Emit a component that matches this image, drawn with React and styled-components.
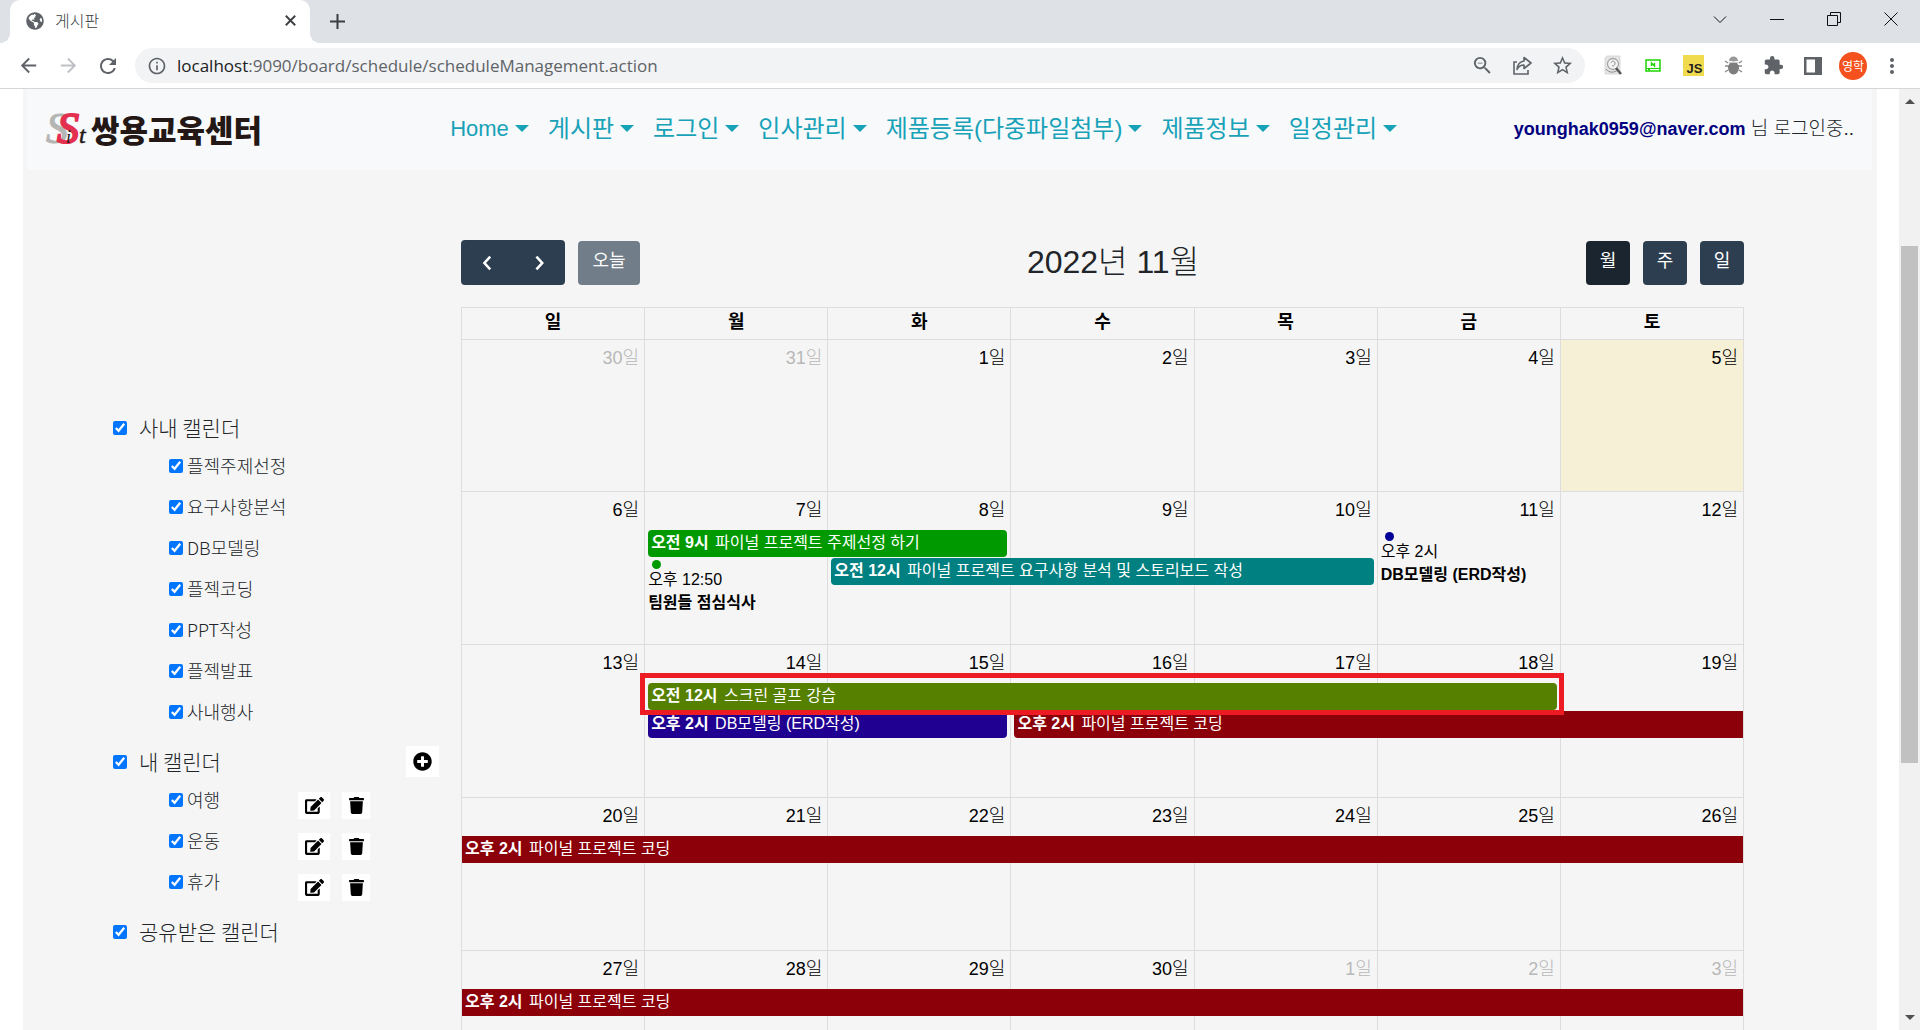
import React from "react";
import styled, { createGlobalStyle, css } from "styled-components";
import {
  MdArrowBack,
  MdArrowForward,
  MdRefresh,
  MdInfoOutline,
  MdZoomOut,
  MdStarBorder,
  MdExtension,
  MdMoreVert,
} from "react-icons/md";
import { FaEdit, FaTrash, FaPlusCircle, FaGlobeAmericas } from "react-icons/fa";

const korean = `"Noto Sans CJK KR", "Noto Sans CJK JP", sans-serif`;
const mixed = `"Liberation Sans", ${korean}`;

const GlobalStyle = createGlobalStyle`
  *, *::before, *::after { box-sizing: border-box; }
  body { margin: 0; overflow: hidden; background: #fff; color: #212529; font-family: ${mixed}; font-size: 18px; font-weight: 300; }
  button, input { font: inherit; color: inherit; }
  button { padding: 0; border: 0; background: none; display: inline-flex; align-items: center; justify-content: center; }
  h1, ul { margin: 0; padding: 0; font-weight: inherit; }
  b, th { font-weight: 700; }
  ul { list-style: none; }
`;

/* ---------- Browser frame ---------- */

const Window = styled.div`
  height: 100vh;
  display: flex;
  flex-direction: column;
`;

const TabStrip = styled.div`
  flex: none;
  height: 43px;
  padding-left: 10px;
  display: flex;
  align-items: flex-start;
  background: #dee1e6;
`;

const Tab = styled.div`
  position: relative;
  width: 300px;
  height: 43px;
  padding: 0 12px 2px 16px;
  display: flex;
  align-items: center;
  gap: 11px;
  border-radius: 10px 10px 0 0;
  background: #fff;
  color: #3c4043;
  font-family: ${korean};
  font-size: 16px;
  line-height: 22px;

  &::before,
  &::after {
    content: "";
    position: absolute;
    bottom: 0;
    width: 10px;
    height: 10px;
  }
  &::before {
    left: -10px;
    background: radial-gradient(circle at 0 0, transparent 10px, #fff 10px);
  }
  &::after {
    right: -10px;
    background: radial-gradient(circle at 100% 0, transparent 10px, #fff 10px);
  }
`;

const TabTitle = styled.span`
  flex: 1;
  padding-bottom: 2px;
`;

const IconButton = styled.button`
  flex: none;
  width: ${(p) => p.$w || 40}px;
  height: ${(p) => p.$h || 40}px;
  color: ${(p) => p.$color || "#5f6368"};
`;

const WindowControls = styled.div`
  margin-left: auto;
  display: flex;
`;

const Toolbar = styled.div`
  flex: none;
  height: 46px;
  padding: 0 9px 0 8px;
  display: flex;
  align-items: center;
  border-bottom: 1px solid #d5d6d8;
  background: #fff;
`;

const AddressBar = styled.label`
  flex: 1;
  height: 35px;
  margin: 0 8px 0 7px;
  padding: 0 3px 0 12px;
  display: flex;
  align-items: center;
  border-radius: 18px;
  background: #f1f3f4;
  color: #202124;
  font-family: "Open Sans", "Noto Sans", sans-serif;
  font-size: 17px;
  font-weight: 400;

  & > svg {
    margin-right: 10px;
    color: #5f6368;
  }
`;

const PathInput = styled.input`
  flex: 1;
  min-width: 0;
  padding: 0;
  border: 0;
  outline: 0;
  background: transparent;
  color: #5f6368;
`;

const Avatar = styled.span`
  width: 28px;
  height: 28px;
  border-radius: 50%;
  background: #f4511e;
  color: #fff;
  font-family: ${korean};
  font-size: 12px;
  font-weight: 400;
  line-height: 27px;
  text-align: center;
`;

const Viewport = styled.div`
  flex: 1;
  min-height: 0;
  display: flex;
  overflow: hidden;
`;

const Scrollbar = styled.div`
  flex: none;
  width: 21px;
  display: flex;
  flex-direction: column;
  align-items: center;
  background: #f1f1f1;
`;

const Thumb = styled.div`
  width: 17px;
  height: 55%;
  margin-bottom: auto;
  background: #c1c1c1;
`;

const ThumbSpace = styled.div`
  height: 14%;
`;

const Arrow = styled.span`
  flex: none;
  margin: 10px 0;
  border: 5px solid transparent;
  ${(p) =>
    p.$down
      ? css`
          border-top-color: #505050;
          border-bottom: 0;
        `
      : css`
          border-bottom-color: #505050;
          border-top: 0;
        `}
`;

/* ---------- Page ---------- */

const Page = styled.div`
  flex: 1;
  min-width: 0;
  margin: 0 22px 0 23px;
  background: #f5f5f5;
`;

const SiteHeader = styled.header`
  height: 81px;
  margin: 0 5px 0 4px;
  padding: 0 18px 2px;
  display: flex;
  align-items: center;
  background: #f8f9fb;
`;

const Logo = styled.a`
  margin-right: 188px;
  display: flex;
  align-items: center;
  gap: 2px;
  color: #231815;
  font-family: ${korean};
  font-size: 31px;
  font-weight: 900;
  line-height: 36px;
  text-decoration: none;
`;

const Nav = styled.nav`
  display: flex;
  gap: 19px;
`;

const NavLink = styled.a`
  display: flex;
  align-items: center;
  gap: 6px;
  color: #17a2b8;
  font-size: ${(p) => (p.$latin ? 22 : 24)}px;
  font-weight: 400;
  line-height: 36px;
  text-decoration: none;
  white-space: nowrap;

  &::after {
    content: "";
    border: 7px solid transparent;
    border-top-color: currentColor;
    border-bottom: 0;
  }
`;

const Account = styled.div`
  margin-left: auto;
  font-size: 19px;
  line-height: 26px;
  white-space: nowrap;

  b {
    color: #000080;
    font-size: 18px;
  }
`;

const Main = styled.main`
  padding: 70px 133px 0 90px;
  display: grid;
  grid-template-columns: 326px minmax(0, 1fr);
  gap: 22px;
`;

/* ---------- Calendar list ---------- */

const Sidebar = styled.aside`
  padding-top: 170px;
  display: flex;
  flex-direction: column;
  gap: 13px;
  font-family: ${korean};
`;

const GroupHead = styled.div`
  height: 34px;
  display: flex;
  align-items: center;
  justify-content: space-between;
`;

const CheckLabel = styled.label`
  display: flex;
  align-items: center;
  gap: ${(p) => (p.$group ? 12 : 4)}px;
  font-size: ${(p) => (p.$group ? 21 : 18)}px;
  line-height: 28px;
  white-space: nowrap;
`;

const Checkbox = styled.input`
  width: 14px;
  height: 14px;
  margin: 2px 0 0;
  accent-color: #0075ff;
`;

const ItemRow = styled.li`
  height: 41px;
  padding-left: 56px;
  display: grid;
  grid-template-columns: 129px auto;
  justify-content: start;
  align-items: center;
`;

const ActionButton = styled.button`
  width: ${(p) => p.$w}px;
  height: ${(p) => p.$h}px;
  background: #fff;
  color: #000;
`;

const RowActions = styled.div`
  align-self: end;
  display: flex;
  gap: 12px;
`;

/* ---------- Calendar ---------- */

const CalToolbar = styled.div`
  height: 45px;
  margin-bottom: 22px;
  display: flex;
  justify-content: space-between;
  align-items: center;
`;

const ButtonRow = styled.div`
  display: flex;
  align-items: flex-end;
  gap: 13px;
`;

const NavGroup = styled.div`
  display: flex;
  border-radius: 4px;
  background: #2c3e50;

  button {
    width: 52px;
    height: 45px;
    color: #fff;
  }
`;

const CalButton = styled.button`
  width: ${(p) => p.$w || 44}px;
  height: 44px;
  padding-bottom: 4px;
  border-radius: 4px;
  background: ${(p) => (p.$active ? "#1a252f" : "#2c3e50")};
  color: #fff;
  font-weight: 400;
  line-height: 26px;

  &:disabled {
    opacity: 0.65;
  }
`;

const CalTitle = styled.h1`
  padding-bottom: 2px;
  font-size: 32px;
  line-height: 40px;
`;

const Table = styled.table`
  width: 100%;
  table-layout: fixed;
  border-collapse: collapse;
  color: #000;

  th,
  td {
    padding: 0;
    border: 1px solid #ddd;
  }
  th {
    height: 32px;
    padding-bottom: 4px;
    line-height: 26px;
  }
  td {
    height: 153px;
    vertical-align: top;
  }
  tbody tr:first-child td {
    height: 152px;
  }
`;

const Day = styled.td`
  background: ${(p) => (p.$today ? "#f6f0d7" : "transparent")};
`;

const DayNumber = styled.div`
  height: 38px;
  padding: 5px 5px 0 0;
  line-height: 26px;
  text-align: right;
  color: ${(p) => (p.$other ? "#b8b8b8" : "#000")};
`;

const Lane = styled.div`
  height: 28px;
`;

const EventBar = styled.a`
  position: relative;
  z-index: ${(p) => (p.$marked ? 2 : 1)};
  display: block;
  width: calc(${(p) => p.$span * 100}% + ${(p) => p.$span - 1 - (p.$from ? 0 : 3) - (p.$open ? 0 : 3)}px);
  height: 27px;
  margin: 0 0 1px ${(p) => (p.$from ? 0 : 3)}px;
  padding-left: 3px;
  border-radius: ${(p) => (p.$from ? 0 : 4)}px ${(p) => (p.$open ? "0 0" : "4px 4px")} ${(p) => (p.$from ? 0 : 4)}px;
  background: ${(p) => p.$color};
  color: #fff;
  font-size: 16px;
  font-weight: 400;
  line-height: 26px;
  text-decoration: none;
  white-space: nowrap;

  b {
    margin-right: 2px;
  }

  ${(p) =>
    p.$marked &&
    css`
      &::after {
        content: "";
        position: absolute;
        inset: -10px -7px -5px -8px;
        border: 5px solid #ed1c24;
      }
    `}
`;

const DotEvent = styled.a`
  display: block;
  padding: 2px 0 0 3px;
  color: #000;
  font-size: 16px;
  font-weight: 400;
  line-height: 23px;
  text-decoration: none;
  white-space: nowrap;

  &::before {
    content: "";
    display: block;
    width: 9px;
    height: 9px;
    margin: 0 0 -1px 4px;
    border-radius: 50%;
    background: ${(p) => p.$color};
  }
  span,
  b {
    display: block;
  }
`;

/* ---------- Data ---------- */

const menu = ["Home", "게시판", "로그인", "인사관리", "제품등록(다중파일첨부)", "제품정보", "일정관리"];

const groups = [
  {
    name: "사내 캘린더",
    items: ["플젝주제선정", "요구사항분석", "DB모델링", "플젝코딩", "PPT작성", "플젝발표", "사내행사"],
  },
  { name: "내 캘린더", editable: true, items: ["여행", "운동", "휴가"] },
  { name: "공유받은 캘린더", items: [] },
];

const weekdays = ["일", "월", "화", "수", "목", "금", "토"];

const coding = { time: "오후 2시", title: "파이널 프로젝트 코딩", color: "#8b0009" };

const weeks = [
  [30, 31, 1, 2, 3, 4, 5],
  [6, 7, 8, 9, 10, 11, 12],
  [13, 14, 15, 16, 17, 18, 19],
  [20, 21, 22, 23, 24, 25, 26],
  [27, 28, 29, 30, 1, 2, 3],
];

const events = {
  "1-1": [
    { time: "오전 9시", title: "파이널 프로젝트 주제선정 하기", color: "#009900", span: 2 },
    { time: "오후 12:50", title: "팀원들 점심식사", color: "#009900", dot: true },
  ],
  "1-2": [
    null,
    { time: "오전 12시", title: "파이널 프로젝트 요구사항 분석 및 스토리보드 작성", color: "#008080", span: 3 },
  ],
  "1-5": [{ time: "오후 2시", title: "DB모델링 (ERD작성)", color: "#000099", dot: true }],
  "2-1": [
    { time: "오전 12시", title: "스크린 골프 강습", color: "#558000", span: 5, marked: true },
    { time: "오후 2시", title: "DB모델링 (ERD작성)", color: "#200090", span: 2 },
  ],
  "2-3": [null, { ...coding, span: 4, open: true }],
  "3-0": [{ ...coding, span: 7, open: true, from: true }],
  "4-0": [{ ...coding, span: 7, open: true, from: true }],
};

/* ---------- Drawings ---------- */

const Emblem = () => (
  <svg width="44" height="64" viewBox="0 0 44 64" aria-hidden="true">
    <g fontFamily="Liberation Serif, serif" fontStyle="italic" fontWeight="400">
      <text x="1" y="46" fontSize="44" fill="#b5b6b4" stroke="#b5b6b4">S</text>
      <text x="12" y="46" fontSize="44" fill="#e4304f" stroke="#e4304f" strokeWidth="2">S</text>
      <text x="21" y="46" fontSize="18" fill="#231815">i</text>
      <text x="34" y="46" fontSize="24" fill="#231815" stroke="#231815" strokeWidth="0.5">t</text>
    </g>
  </svg>
);

const ShareIcon = () => (
  <svg width="21" height="20" viewBox="0 0 21 20" fill="none" stroke="#5f6368" strokeWidth="1.6" aria-hidden="true">
    <path d="M5 6H2v12h14v-4" />
    <path d="M12 5V1.500l7 5.500-7 5.500V9C8.500 9 6.500 10.500 5 13.500 5.500 8.500 8 5.500 12 5z" strokeLinejoin="round" />
  </svg>
);

const SearchPageIcon = () => (
  <svg width="20" height="21" viewBox="0 0 20 21" aria-hidden="true">
    <path d="M4 1h13v18H2V3z" fill="#e4e4e4" stroke="#d8d8d8" />
    <circle cx="10" cy="9" r="5.500" fill="#f4f4f4" stroke="#a5a5a5" strokeWidth="1.300" />
    <path d="M3 14c3 4 8 4 12 1M8 8c1-3 4-2 4 0s-1 3-3 3" fill="none" stroke="#8d8d8d" />
    <path d="M13 13l5 6" stroke="#555" strokeWidth="2.500" />
  </svg>
);

const ScreenIcon = () => (
  <svg width="16" height="14" viewBox="0 0 16 14" fill="none" stroke="#1ed400" aria-hidden="true">
    <path d="M1 1h14v11H1z" strokeWidth="1.500" />
    <path d="M1 9.500h14" />
    <path d="M6.500 7V4l3 3V4" strokeWidth="1.400" />
    <path d="M4 9.500v2" strokeWidth="2" />
  </svg>
);

const ScriptBadge = styled.span`
  width: 21px;
  height: 21px;
  padding: 5px 1px 0 0;
  background: #f0db4f;
  color: #222;
  font: 700 13px/17px ${mixed};
  text-align: right;
`;

const BugIcon = () => (
  <svg width="19" height="19" viewBox="0 0 19 19" aria-hidden="true">
    <path d="M1 5l3 2M1 10h4M1 16l3-2M18 5l-3 2M18 10h-4M18 16l-3-2" stroke="#8a8a8a" strokeWidth="1.400" fill="none" />
    <path d="M5 5a4.500 4.500 0 019 0z" fill="#999" />
    <ellipse cx="9.500" cy="12" rx="5.500" ry="6.500" fill="#7d7d7d" />
    <path d="M4.500 6.500h10" stroke="#ccc" />
  </svg>
);

const PanelIcon = () => (
  <svg width="18" height="18" viewBox="0 0 18 18" aria-hidden="true">
    <path d="M0 0h18v18H0zM2.500 2.500v13h8.500v-13z" fillRule="evenodd" fill="#5f6368" />
  </svg>
);

const LineIcon = ({ d, size = 14, width = 1, color = "#111" }) => (
  <svg width={size} height={size} viewBox="0 0 14 14" fill="none" stroke={color} strokeWidth={width} aria-hidden="true">
    <path d={d} />
  </svg>
);

/* ---------- Parts ---------- */

function Browser({ children }) {
  return (
    <Window>
      <TabStrip>
        <Tab>
          <FaGlobeAmericas size={18} color="#5f6368" />
          <TabTitle>게시판</TabTitle>
          <IconButton $w={16} $h={16} aria-label="탭 닫기"><LineIcon size={11} width={2.4} color="#3c4043" d="M1 1l12 12M13 1L1 13" /></IconButton>
        </Tab>
        <IconButton $w={54} $h={42} aria-label="새 탭"><LineIcon size={15} width={1.9} color="#3c4043" d="M7 0v14M0 7h14" /></IconButton>
        <WindowControls>
          <IconButton $w={57} $h={37} aria-label="탭 검색"><LineIcon d="M1 4.500l6 6 6-6" /></IconButton>
          <IconButton $w={57} $h={37} aria-label="최소화"><LineIcon d="M0 7.500h14" /></IconButton>
          <IconButton $w={57} $h={37} aria-label="복원"><LineIcon d="M.5 3.500h10v10H.5zM3.500 3V.5h10v10H11" /></IconButton>
          <IconButton $w={58} $h={37} aria-label="닫기"><LineIcon d="M.5.5l13 13M13.500.5l-13 13" /></IconButton>
        </WindowControls>
      </TabStrip>
      <Toolbar>
        <IconButton aria-label="뒤로"><MdArrowBack size={23} /></IconButton>
        <IconButton $color="#bdc1c6" aria-label="앞으로"><MdArrowForward size={23} /></IconButton>
        <IconButton aria-label="새로고침"><MdRefresh size={24} /></IconButton>
        <AddressBar>
          <MdInfoOutline size={20} />
          <span>localhost</span>
          <PathInput defaultValue=":9090/board/schedule/scheduleManagement.action" aria-label="주소" />
          <IconButton aria-label="축소"><MdZoomOut size={23} /></IconButton>
          <IconButton aria-label="공유"><ShareIcon /></IconButton>
          <IconButton aria-label="북마크"><MdStarBorder size={23} /></IconButton>
        </AddressBar>
        <IconButton aria-label="페이지 검색"><SearchPageIcon /></IconButton>
        <IconButton aria-label="화면"><ScreenIcon /></IconButton>
        <IconButton aria-label="스크립트"><ScriptBadge>JS</ScriptBadge></IconButton>
        <IconButton aria-label="디버그"><BugIcon /></IconButton>
        <IconButton aria-label="확장 프로그램"><MdExtension size={21} /></IconButton>
        <IconButton aria-label="측면 패널"><PanelIcon /></IconButton>
        <IconButton aria-label="프로필"><Avatar>영학</Avatar></IconButton>
        <IconButton $w={38} aria-label="메뉴"><MdMoreVert size={24} /></IconButton>
      </Toolbar>
      <Viewport>
        {children}
        <Scrollbar>
          <Arrow />
          <ThumbSpace />
          <Thumb />
          <Arrow $down />
        </Scrollbar>
      </Viewport>
    </Window>
  );
}

function CalendarGroup({ name, items, editable }) {
  return (
    <section>
      <GroupHead>
        <CheckLabel $group><Checkbox type="checkbox" defaultChecked />{name}</CheckLabel>
        {editable && (
          <ActionButton $w={33} $h={31} aria-label="캘린더 추가"><FaPlusCircle size={19} /></ActionButton>
        )}
      </GroupHead>
      <ul>
        {items.map((item) => (
          <ItemRow key={item}>
            <CheckLabel><Checkbox type="checkbox" defaultChecked />{item}</CheckLabel>
            {editable && (
              <RowActions>
                <ActionButton $w={32} $h={27} aria-label={`${item} 수정`}><FaEdit size={19} /></ActionButton>
                <ActionButton $w={28} $h={27} aria-label={`${item} 삭제`}><FaTrash size={17} /></ActionButton>
              </RowActions>
            )}
          </ItemRow>
        ))}
      </ul>
    </section>
  );
}

function CalendarEvent({ event }) {
  if (!event) return <Lane />;
  if (event.dot) {
    return (
      <DotEvent href="#" $color={event.color}>
        <span>{event.time}</span>
        <b>{event.title}</b>
      </DotEvent>
    );
  }
  return (
    <EventBar href="#" $color={event.color} $span={event.span} $open={event.open} $from={event.from} $marked={event.marked}>
      <b>{event.time}</b> {event.title}
    </EventBar>
  );
}

function Calendar() {
  return (
    <section>
      <CalToolbar>
        <ButtonRow>
          <NavGroup>
            <button aria-label="이전 달"><LineIcon size={18} width={2} color="#fff" d="M9.500 2L5 7l4.500 5" /></button>
            <button aria-label="다음 달"><LineIcon size={18} width={2} color="#fff" d="M5 2l4.500 5L5 12" /></button>
          </NavGroup>
          <CalButton $w={62} disabled>오늘</CalButton>
        </ButtonRow>
        <CalTitle>2022년 11월</CalTitle>
        <ButtonRow>
          <CalButton $active>월</CalButton>
          <CalButton>주</CalButton>
          <CalButton>일</CalButton>
        </ButtonRow>
      </CalToolbar>
      <Table>
        <thead>
          <tr>{weekdays.map((d) => <th key={d} scope="col">{d}</th>)}</tr>
        </thead>
        <tbody>
          {weeks.map((week, w) => (
            <tr key={w}>
              {week.map((day, d) => (
                <Day key={d} $today={w === 0 && d === 6}>
                  <DayNumber $other={(w === 0 && day > 7) || (w === 4 && day < 7)}>{day}일</DayNumber>
                  {(events[`${w}-${d}`] || []).map((event, i) => <CalendarEvent key={i} event={event} />)}
                </Day>
              ))}
            </tr>
          ))}
        </tbody>
      </Table>
    </section>
  );
}

export default function App() {
  return (
    <>
      <GlobalStyle />
      <Browser>
        <Page>
          <SiteHeader>
            <Logo href="#"><Emblem />쌍용교육센터</Logo>
            <Nav>
              {menu.map((item) => <NavLink key={item} href="#" $latin={item === "Home"}>{item}</NavLink>)}
            </Nav>
            <Account><b>younghak0959@naver.com</b> 님 로그인중..</Account>
          </SiteHeader>
          <Main>
            <Sidebar>
              {groups.map((group) => <CalendarGroup key={group.name} {...group} />)}
            </Sidebar>
            <Calendar />
          </Main>
        </Page>
      </Browser>
    </>
  );
}
